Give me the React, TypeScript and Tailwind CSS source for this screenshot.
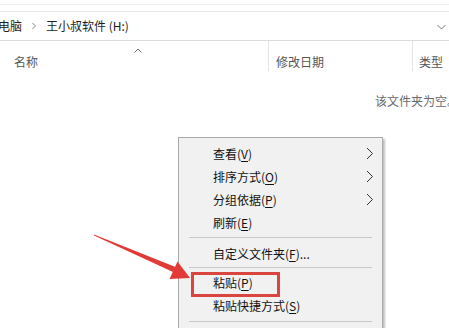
import { useState } from 'react';

const font = 'font-["Microsoft_YaHei","Noto_Sans_CJK_SC",sans-serif]';

type Item = { label: string; key: string; suffix?: string; sub?: boolean };

const topItems: Item[] = [
  { label: '查看', key: 'V', sub: true },
  { label: '排序方式', key: 'O', sub: true },
  { label: '分组依据', key: 'P', sub: true },
  { label: '刷新', key: 'E' },
];

function Chevron() {
  return (
    <svg width="8" height="13" viewBox="0 0 8 13" className="text-[#333]">
      <polyline points="1,1 6.5,6.5 1,12" fill="none" stroke="currentColor" strokeWidth="1" />
    </svg>
  );
}

function MenuItem({ item }: { item: Item }) {
  return (
    <div className="flex h-[23px] items-center justify-between pl-[34px] pr-[8px] text-[12px] text-[#111]">
      <span>
        {item.label}(<span className="underline underline-offset-2">{item.key}</span>){item.suffix}
      </span>
      {item.sub && <Chevron />}
    </div>
  );
}

function ContextMenu() {
  return (
    <div className="absolute left-[178px] top-[137px] w-[205px] border border-[#a9a9a9] bg-[#f1f1f1] pt-[4px] shadow-[2px_2px_2px_rgba(0,0,0,0.25)]">
      {topItems.map(item => (
        <MenuItem key={item.label} item={item} />
      ))}
      <div className="mx-[10px] mb-[4px] mt-[3px] h-px bg-[#c8c8c8]" />
      <MenuItem item={{ label: '自定义文件夹', key: 'F', suffix: '...' }} />
      <div className="mx-[10px] mb-[3px] mt-[2px] h-px bg-[#c8c8c8]" />
      <div className="relative">
        <MenuItem item={{ label: '粘贴', key: 'P' }} />
        <div className="absolute left-[12px] top-[1px] h-[25px] w-[89px] border-[3px] border-[#d9463f]" />
      </div>
      <MenuItem item={{ label: '粘贴快捷方式', key: 'S' }} />
      <div className="mx-[10px] mb-[8px] mt-[4px] h-px bg-[#c8c8c8]" />
    </div>
  );
}

function Arrow() {
  return (
    <svg className="pointer-events-none absolute left-0 top-0" width="449" height="328" viewBox="0 0 449 328">
      <polygon points="94,234.5 175.5,267 173,272 94,235.5" fill="#e23a36" />
      <polygon points="190,278 169.5,279 177.5,261.5" fill="#e23a36" />
    </svg>
  );
}

export default function App() {
  const [sorted] = useState(true);
  return (
    <div className={`relative h-[328px] w-[449px] overflow-hidden bg-white ${font}`}>
      <div className="h-[5px] border-b border-[#ededed]" />
      <div className="h-[7px] border-b border-[#e6e6e6]" />
      <div className="flex h-[29px] items-center border-b border-[#dcdcdc] pb-[1px] text-[12px] text-[#1e1e1e]">
        <span className="-ml-[2px]">电脑</span>
        <svg width="6" height="8" viewBox="0 0 6 8" className="ml-[9px] text-[#888]">
          <polyline points="1.5,1 4.5,4 1.5,7" fill="none" stroke="currentColor" strokeWidth="1" />
        </svg>
        <span className="ml-[9px]">王小叔软件 (H:)</span>
        <svg width="9" height="6" viewBox="0 0 9 6" className="ml-auto mr-[3px] mt-[3px] text-[#777]">
          <polyline points="0.5,1 4.5,5 8.5,1" fill="none" stroke="currentColor" strokeWidth="1" />
        </svg>
      </div>
      <div className="relative flex h-[40px] items-end pb-[10px] text-[12px] text-[#555]">
        {sorted && (
          <svg width="8" height="5" viewBox="0 0 8 5" className="absolute left-[134px] top-[7px] text-[#777]">
            <polyline points="0.5,4.5 4,1 7.5,4.5" fill="none" stroke="currentColor" strokeWidth="1" />
          </svg>
        )}
        <div className="w-[268px] pl-[14px]">名称</div>
        <div className="flex w-[144px] items-end self-stretch border-l border-[#e3e3e3] pl-[7px] pt-[7px]">
          <span>修改日期</span>
        </div>
        <div className="flex items-end self-stretch border-l border-[#e3e3e3] pl-[6px]">
          <span>类型</span>
        </div>
      </div>
      <div className="flex justify-end pt-[11px]">
        <span className="-mr-[10px] whitespace-nowrap text-[12px] text-[#6a6a6a]">该文件夹为空。</span>
      </div>
      <ContextMenu />
      <Arrow />
    </div>
  );
}
